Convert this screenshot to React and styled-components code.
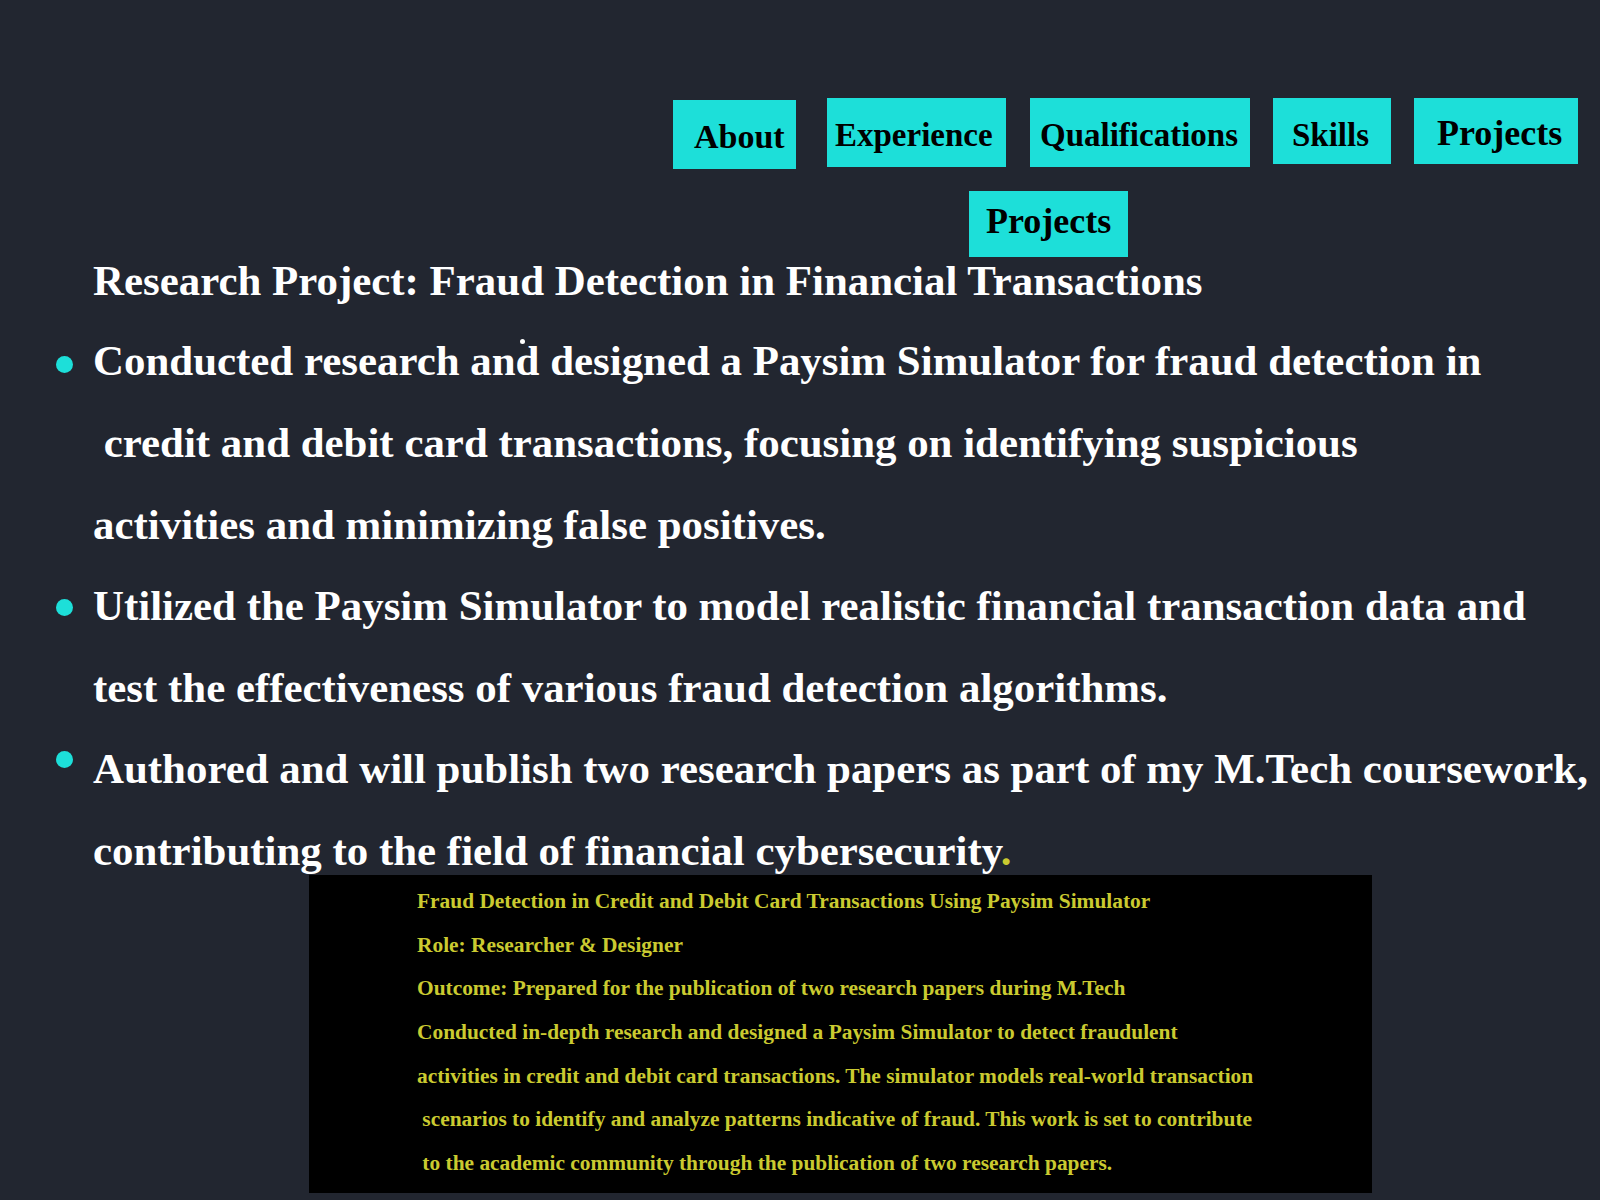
import React from "react";
import styled, { createGlobalStyle } from "styled-components";

const Global = createGlobalStyle`
  html, body {
    margin: 0;
    padding: 0;
    background: #222630;
  }
  body {
    font-family: "Liberation Serif", "Times New Roman", serif;
    font-weight: bold;
  }
`;

const CYAN = "#1ddfd9";
const YELLOW = "#caca30";

const Page = styled.div`
  box-sizing: border-box;
  min-height: 1200px;
  padding-top: 98px;
  overflow: hidden;
`;

const Nav = styled.nav`
  display: flex;
  align-items: flex-start;
  gap: 23px;
  padding-left: 673px;
`;

const NavButton = styled.a`
  display: block;
  box-sizing: border-box;
  width: ${(p) => p.$w}px;
  height: ${(p) => p.$h}px;
  margin-top: ${(p) => p.$mt || 0}px;
  margin-right: ${(p) => p.$mr || 0}px;
  padding: ${(p) => p.$pt}px 0 0 ${(p) => p.$pl}px;
  font-size: ${(p) => p.$fs}px;
  line-height: 1;
  background: ${CYAN};
  color: #000;
  font-weight: bold;
  white-space: nowrap;
  text-decoration: none;
`;

const SectionTitle = styled.h1`
  box-sizing: border-box;
  width: 159px;
  height: 66px;
  margin: 22px 0 0 969px;
  padding: 11.5px 0 0 17px;
  font-size: 36px;
  line-height: 1;
  background: ${CYAN};
  color: #000;
  font-weight: bold;
  white-space: nowrap;
`;

const Heading = styled.h2`
  margin: 0;
  padding-left: 93px;
  font-size: 42.9px;
  line-height: 47px;
  color: #fff;
  font-weight: bold;
  white-space: nowrap;
`;

const List = styled.ul`
  list-style: none;
  margin: 16.4px 0 0;
  padding: 0 0 0 93px;
  font-size: 42.9px;
  line-height: 81.6px;
  color: #fff;
`;

const Item = styled.li`
  position: relative;
  white-space: pre;

  &::before {
    content: "";
    position: absolute;
    left: -37px;
    top: ${(p) => p.$dotTop - 8.5}px;
    width: 17px;
    height: 17px;
    border-radius: 50%;
    background: ${CYAN};
  }
`;

const Speck = styled.span`
  position: absolute;
  left: 427px;
  top: 19px;
  width: 5px;
  height: 5px;
  border-radius: 50%;
  background: #fff;
`;

const Accent = styled.span`
  color: ${YELLOW};
`;

const Card = styled.section`
  box-sizing: border-box;
  width: 1063px;
  height: 318px;
  margin: -16.6px 0 0 309px;
  padding: 5px 0 8px 108px;
  background: #000;
  color: ${YELLOW};
  font-size: 21.4px;
  line-height: 43.7px;
  font-weight: bold;
`;

const CardLine = styled.p`
  margin: 0;
  white-space: pre;
`;

const cardLines = [
  "Fraud Detection in Credit and Debit Card Transactions Using Paysim Simulator",
  "Role: Researcher & Designer",
  "Outcome: Prepared for the publication of two research papers during M.Tech",
  "Conducted in-depth research and designed a Paysim Simulator to detect fraudulent",
  "activities in credit and debit card transactions. The simulator models real-world transaction",
  " scenarios to identify and analyze patterns indicative of fraud. This work is set to contribute",
  " to the academic community through the publication of two research papers.",
];

export default function App() {
  return (
    <>
      <Global />
      <Page>
        <Nav>
          <NavButton $w={123} $h={69} $mt={2} $mr={8} $pt={19.8} $pl={21} $fs={34}>
            About
          </NavButton>
          <NavButton $w={179} $h={69} $mr={1} $pt={21.4} $pl={8} $fs={33}>
            Experience
          </NavButton>
          <NavButton $w={220} $h={69} $pt={21.4} $pl={10} $fs={33}>
            Qualifications
          </NavButton>
          <NavButton $w={118} $h={66} $pt={21.4} $pl={19} $fs={33}>
            Skills
          </NavButton>
          <NavButton $w={164} $h={66} $pt={16.8} $pl={23} $fs={36}>
            Projects
          </NavButton>
        </Nav>
        <SectionTitle>Projects</SectionTitle>
        <Heading>Research Project: Fraud Detection in Financial Transactions</Heading>
        <List>
          <Item $dotTop={43.9}>
            <Speck />
            {"Conducted research and designed a Paysim Simulator for fraud detection in"}
            <br />
            {" credit and debit card transactions, focusing on identifying suspicious"}
            <br />
            {"activities and minimizing false positives."}
          </Item>
          <Item $dotTop={41.9}>
            {"Utilized the Paysim Simulator to model realistic financial transaction data and"}
            <br />
            {"test the effectiveness of various fraud detection algorithms."}
          </Item>
          <Item $dotTop={31.1}>
            {"Authored and will publish two research papers as part of my M.Tech coursework,"}
            <br />
            {"contributing to the field of financial cybersecurity"}
            <Accent>.</Accent>
          </Item>
        </List>
        <Card>
          {cardLines.map((l, i) => (
            <CardLine key={i}>{l}</CardLine>
          ))}
        </Card>
      </Page>
    </>
  );
}
